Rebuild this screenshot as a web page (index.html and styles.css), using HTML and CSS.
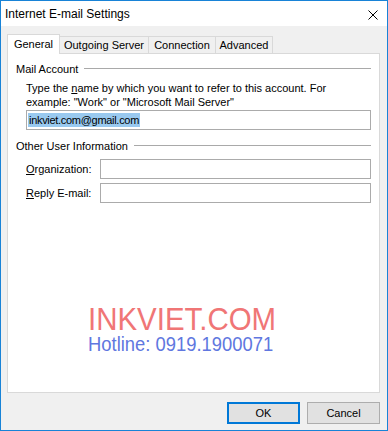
FILE: index.html
```html
<!DOCTYPE html>
<html>
<head>
<meta charset="utf-8">
<link rel="stylesheet" href="styles.css">
</head>
<body>
<div class="window">
  <div class="titlebar">
    <span class="title">Internet E-mail Settings</span>
    <svg class="close" width="10" height="10" viewBox="0 0 10 10"><path d="M0.5 0.5 L9.5 9.5 M9.5 0.5 L0.5 9.5" stroke="#000" stroke-width="1" fill="none"/></svg>
  </div>
  <div class="client">
    <div class="tabs">
      <div class="tab selected t1">General</div>
      <div class="tab t2">Outgoing Server</div>
      <div class="tab t3">Connection</div>
      <div class="tab t4">Advanced</div>
    </div>
    <div class="panel">
      <div class="group-head"><span>Mail Account</span><div class="rule"></div></div>
      <p class="desc">Type the <u>n</u>ame by which you want to refer to this account. For<br>example: "Work" or "Microsoft Mail Server"</p>
      <div class="field wide"><span class="sel">inkviet.com@gmail.com</span></div>
      <div class="group-head second"><span>Other User Information</span><div class="rule"></div></div>
      <div class="row first"><span class="lbl"><u>O</u>rganization:</span><div class="field"></div></div>
      <div class="row"><span class="lbl"><u>R</u>eply E-mail:</span><div class="field"></div></div>
      <div class="watermark">
        <div class="wm1">INKVIET.COM</div>
        <div class="wm2">Hotline: 0919.1900071</div>
      </div>
    </div>
    <div class="buttons">
      <div class="btn default">OK</div>
      <div class="btn">Cancel</div>
    </div>
  </div>
</div>
</body>
</html>
```
FILE: styles.css
```css
html, body { margin: 0; padding: 0; }
body {
  font-family: "Liberation Sans", Arial, sans-serif;
  font-size: 11px;
  color: #000;
}
.window {
  width: 388px;
  height: 431px;
  box-sizing: border-box;
  border: 1px solid #1883d7;
  display: flex;
  flex-direction: column;
  background: #f0f0f0;
}
.titlebar {
  height: 25px;
  background: #fff;
  display: flex;
  align-items: center;
  justify-content: space-between;
  padding: 0 9px 0 4px;
  flex: none;
}
.title { font-size: 12px; }
.close { display: block; margin-top: 2px; }
.client {
  flex: 1;
  display: flex;
  flex-direction: column;
}
.tabs {
  display: flex;
  align-items: flex-end;
  margin: 8px 0 0 6px;
  height: 19px;
}
.tab {
  box-sizing: border-box;
  height: 17px;
  border: 1px solid #d9d9d9;
  border-bottom: none;
  background: #f0f0f0;
  display: flex;
  align-items: center;
  justify-content: center;
  margin-left: -1px;
}
.tab.selected {
  height: 20px;
  margin-bottom: -1px;
  background: #fff;
  position: relative;
  z-index: 1;
  margin-left: 0;
  padding-bottom: 2px;
}
.t1 { width: 53px; }
.t2 { width: 90px; }
.t3 { width: 68px; }
.t4 { width: 58px; }
.panel {
  position: relative;
  box-sizing: border-box;
  width: 373px;
  height: 340px;
  margin-left: 6px;
  background: #fff;
  border: 1px solid #d9d9d9;
  padding: 8px 8px 0 8px;
}
.group-head {
  display: flex;
  align-items: center;
  height: 14px;
  line-height: 14px;
}
.group-head .rule {
  flex: 1;
  height: 1px;
  background: #a9a9a9;
  margin-left: 6px;
  margin-top: -1px;
}
.desc {
  margin: 5px 0 0 10px;
  line-height: 14px;
}
.field {
  box-sizing: border-box;
  height: 20px;
  border: 1px solid #ababab;
  background: #fff;
  flex: 1;
}
.field.wide {
  margin: 1px 0 0 10px;
  display: flex;
  align-items: center;
  padding-left: 1px;
}
.sel {
  background: #99c9ef;
  line-height: 14px;
  padding: 0 1px;
  letter-spacing: -0.3px;
}
.group-head.second { margin-top: 9px; }
.row {
  display: flex;
  align-items: center;
  margin-left: 10px;
  margin-top: 4px;
}
.row.first { margin-top: 6px; }
.lbl { width: 74px; }
.watermark {
  position: absolute;
  left: 80px;
  top: 250px;
  transform: scaleX(0.92);
  transform-origin: left top;
}
.wm1 {
  font-family: "Liberation Sans", Arial, sans-serif;
  font-size: 32px;
  line-height: 30px;
  color: #f07676;
  white-space: nowrap;
}
.wm2 {
  font-family: "Liberation Sans", Arial, sans-serif;
  font-size: 20px;
  line-height: 20px;
  color: #6077e0;
  white-space: nowrap;
}
.buttons {
  display: flex;
  justify-content: flex-end;
  gap: 7px;
  padding-right: 7px;
  margin-top: 9px;
}
.btn {
  box-sizing: border-box;
  width: 73px;
  height: 22px;
  background: #e1e1e1;
  border: 1px solid #adadad;
  display: flex;
  align-items: center;
  justify-content: center;
}
.btn.default {
  border: 2px solid #0078d7;
}
```
